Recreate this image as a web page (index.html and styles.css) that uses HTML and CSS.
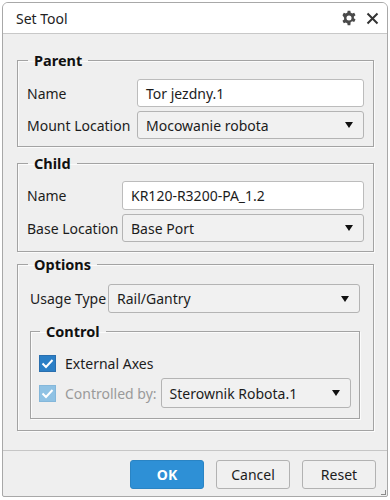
FILE: index.html
```html
<!DOCTYPE html>
<html>
<head>
<meta charset="utf-8">
<link rel="stylesheet" href="styles.css">
</head>
<body>
<div class="dialog">
  <div class="titlebar">
    <span class="title">Set Tool</span>
    <span class="tb-icons">
      <svg class="gear" width="16" height="16" viewBox="0 0 24 24"><path fill="#4a4a4a" fill-rule="evenodd" d="M10 1h4l.6 3.2a8 8 0 0 1 2.1 1.2l3.1-1.1 2 3.5-2.5 2.1a8 8 0 0 1 0 2.4l2.5 2.1-2 3.5-3.1-1.1a8 8 0 0 1-2.1 1.2L14 23h-4l-.6-3.2a8 8 0 0 1-2.1-1.2l-3.1 1.1-2-3.5 2.5-2.1a8 8 0 0 1 0-2.4L2.2 7.8l2-3.5 3.1 1.1a8 8 0 0 1 2.1-1.2zM12 8.2a3.8 3.8 0 1 0 0 7.6 3.8 3.8 0 0 0 0-7.6z"/></svg>
      <svg class="close" width="13" height="13" viewBox="0 0 13 13"><path d="M1.5 1.5l10 10M11.5 1.5l-10 10" stroke="#333" stroke-width="2" fill="none"/></svg>
    </span>
  </div>
  <div class="content">
    <fieldset class="group parent">
      <legend>Parent</legend>
      <div class="grid">
        <label>Name</label>
        <div class="input">Tor jezdny.1</div>
        <label>Mount Location</label>
        <div class="select"><span>Mocowanie robota</span><span class="arrow"></span></div>
      </div>
    </fieldset>
    <fieldset class="group child">
      <legend>Child</legend>
      <div class="grid">
        <label>Name</label>
        <div class="input">KR120-R3200-PA_1.2</div>
        <label>Base Location</label>
        <div class="select"><span>Base Port</span><span class="arrow"></span></div>
      </div>
    </fieldset>
    <fieldset class="group options">
      <legend>Options</legend>
      <div class="grid">
        <label>Usage Type</label>
        <div class="select"><span>Rail/Gantry</span><span class="arrow"></span></div>
      </div>
      <fieldset class="group control">
        <legend>Control</legend>
        <div class="check-row">
          <span class="checkbox"><svg width="13" height="11" viewBox="0 0 13 11"><path d="M1.5 5.5l3.5 3.5 6.5-7" stroke="#fff" stroke-width="2" fill="none"/></svg></span>
          <span>External Axes</span>
        </div>
        <div class="check-row second">
          <span class="checkbox disabled"><svg width="13" height="11" viewBox="0 0 13 11"><path d="M1.5 5.5l3.5 3.5 6.5-7" stroke="#fff" stroke-width="2" fill="none"/></svg></span>
          <span class="muted">Controlled by:</span>
          <div class="select grow"><span>Sterownik Robota.1</span><span class="arrow"></span></div>
        </div>
      </fieldset>
    </fieldset>
  </div>
  <div class="footer">
    <button class="btn primary">OK</button>
    <button class="btn">Cancel</button>
    <button class="btn">Reset</button>
    <span class="grip"></span>
  </div>
</div>
</body>
</html>
```
FILE: styles.css
```css
* { box-sizing: border-box; }
html, body { margin: 0; padding: 0; background: #fff; }
body {
  font-family: "Noto Sans", "Open Sans", sans-serif;
  font-size: 14px;
  color: #1c1c1c;
}
.dialog {
  width: 386px;
  height: 495px;
  margin: 2px;
  border: 1px solid #a8a8a8;
  border-radius: 6px 6px 2px 2px;
  background: #efefef;
  display: flex;
  flex-direction: column;
  overflow: hidden;
}
.titlebar {
  height: 31px;
  flex: none;
  background: #fff;
  border-bottom: 1px solid #c8c8c8;
  display: flex;
  align-items: center;
  justify-content: space-between;
  padding: 0 8px 0 13px;
}
.title { font-size: 14px; color: #222; }
.tb-icons { display: flex; align-items: center; gap: 9px; }
.gear, .close { display: block; }
.content {
  flex: 1;
  padding: 16px 13px 0 14px;
}
.group {
  margin: 0;
  border: 1px solid #a3a3a3;
  box-shadow: inset 1px 1px 0 #fbfbfb, 1px 1px 0 #fbfbfb;
  padding: 0 9px;
  min-width: 0;
}
.group legend {
  font-weight: bold;
  font-size: 14.5px;
  line-height: 20px;
  padding: 0 6px;
  margin-left: 1px;
  color: #111;
}
.grid {
  display: grid;
  row-gap: 4px;
  align-items: center;
}
.grid label { white-space: nowrap; }
.parent { padding-top: 9px; padding-bottom: 7px; }
.parent .grid { grid-template-columns: 110px 1fr; }
.child { margin-top: 6px; padding-top: 8px; padding-bottom: 9px; }
.child .grid { grid-template-columns: 95px 1fr; }
.child .grid .input { height: 29px; }
.options { margin-top: 2px; padding: 10px 13px 11px 12px; }
.options > legend { margin-left: -2px; }
.options .grid { grid-template-columns: 78px 1fr; }
.options .grid .select { height: 29px; }
.input, .select {
  height: 28px;
  border: 1px solid #bcbcbc;
  border-radius: 3px;
  display: flex;
  align-items: center;
  padding: 0 10px 0 8px;
  white-space: nowrap;
}
.input { background: #fff; }
.select {
  background: #f1f1f1;
  justify-content: space-between;
  border-color: #b4b4b4;
}
.arrow {
  width: 0; height: 0;
  border-left: 4.5px solid transparent;
  border-right: 4.5px solid transparent;
  border-top: 6px solid #111;
}
.control {
  margin-top: 8px;
  padding: 11px 8px 10px 8px;
}
.control > legend { margin-left: 1px; }
.check-row {
  display: flex;
  align-items: center;
  height: 22px;
  gap: 9px;
}
.check-row.second { margin-top: 4px; height: 30px; gap: 0; }
.check-row.second .checkbox { margin-right: 9px; }
.check-row.second .muted { margin-right: 4px; }
.checkbox {
  width: 17px; height: 17px;
  background: #2b7fc6;
  border: 1px solid #2a6fae;
  display: flex; align-items: center; justify-content: center;
  flex: none;
}
.checkbox.disabled { background: #8fc2e4; border-color: #84b7da; }
.muted { color: #9a9a9a; white-space: nowrap; }
.grow { flex: 1; height: 30px; }
.footer {
  height: 46px;
  flex: none;
  border-top: 1px solid #c6c6c6;
  display: flex;
  justify-content: flex-end;
  align-items: flex-start;
  padding: 9px 11px 0 0;
  gap: 12px;
  position: relative;
}
.btn {
  width: 74px;
  height: 29px;
  font-family: inherit;
  font-size: 14px;
  color: #1c1c1c;
  background: #f0f0f0;
  border: 1px solid #b2b2b2;
  border-radius: 3px;
  padding: 0;
}
.btn.primary {
  background: #2e90d6;
  border-color: #2a84c4;
  color: #fff;
  font-weight: bold;
}
.grip {
  position: absolute;
  right: 1px; bottom: 1px;
  width: 5px; height: 5px;
  border-right: 1px solid #8a8a8a;
  border-bottom: 1px solid #8a8a8a;
}
```
